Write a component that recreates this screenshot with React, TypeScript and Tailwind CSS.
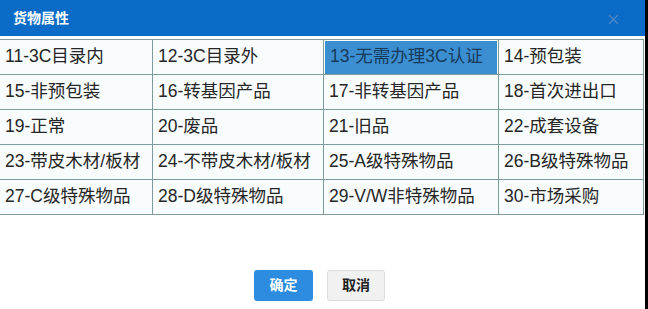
import React, { useState } from "react";

const items = [
  "11-3C目录内",
  "12-3C目录外",
  "13-无需办理3C认证",
  "14-预包装",
  "15-非预包装",
  "16-转基因产品",
  "17-非转基因产品",
  "18-首次进出口",
  "19-正常",
  "20-废品",
  "21-旧品",
  "22-成套设备",
  "23-带皮木材/板材",
  "24-不带皮木材/板材",
  "25-A级特殊物品",
  "26-B级特殊物品",
  "27-C级特殊物品",
  "28-D级特殊物品",
  "29-V/W非特殊物品",
  "30-市场采购",
];

const App: React.FC = () => {
  const [selected, setSelected] = useState(2);

  return (
    <div
      className="flex w-[648px] h-[309px] bg-white overflow-hidden"
      style={{ fontFamily: '"Liberation Sans", "Noto Sans CJK SC", sans-serif' }}
    >
      <div className="flex flex-col w-[645px]">
        {/* title bar */}
        <div className="flex items-center justify-between h-[36px] bg-[#0b6cc8] pl-[13px] pr-[26px]">
          <span className="text-white text-[14px] font-bold">货物属性</span>
          <svg width="11" height="11" viewBox="0 0 11 11" className="mt-[2px]">
            <path d="M1 1L10 10M10 1L1 10" stroke="#4f86c6" strokeWidth="1.3" />
          </svg>
        </div>

        {/* options table */}
        <div className="mt-[3px] w-[644px] grid grid-cols-[152px_171px_175px_146px] border-t border-r border-[#7f9c9c] bg-[#f8fcfc]">
          {items.map((item, i) => (
            <div
              key={item}
              onClick={() => setSelected(i)}
              className={`h-[35px] flex items-center border-b border-[#7f9c9c] ${
                i % 4 === 0 ? "" : "border-l"
              }`}
            >
              <div
                className={`flex items-center w-full pl-[5px] text-[17.5px] leading-none ${
                  i === selected
                    ? "bg-[#3b8fd1] text-[#173a5c] m-[1px] h-[33px]"
                    : "h-full text-[#262626]"
                }`}
              >
                {item}
              </div>
            </div>
          ))}
        </div>

        {/* buttons */}
        <div className="flex justify-center gap-[14px] mt-[55px] pr-[6px]">
          <button className="w-[59px] h-[31px] rounded-[3px] bg-[#2e8ce0] text-white text-[14px] font-bold">
            确定
          </button>
          <button className="w-[58px] h-[31px] rounded-[3px] bg-[#f1f1f1] border border-[#dcdcdc] text-[#222] text-[14px] font-bold">
            取消
          </button>
        </div>
      </div>
      <div className="w-[3px] h-full bg-black" />
    </div>
  );
};

export default App;
